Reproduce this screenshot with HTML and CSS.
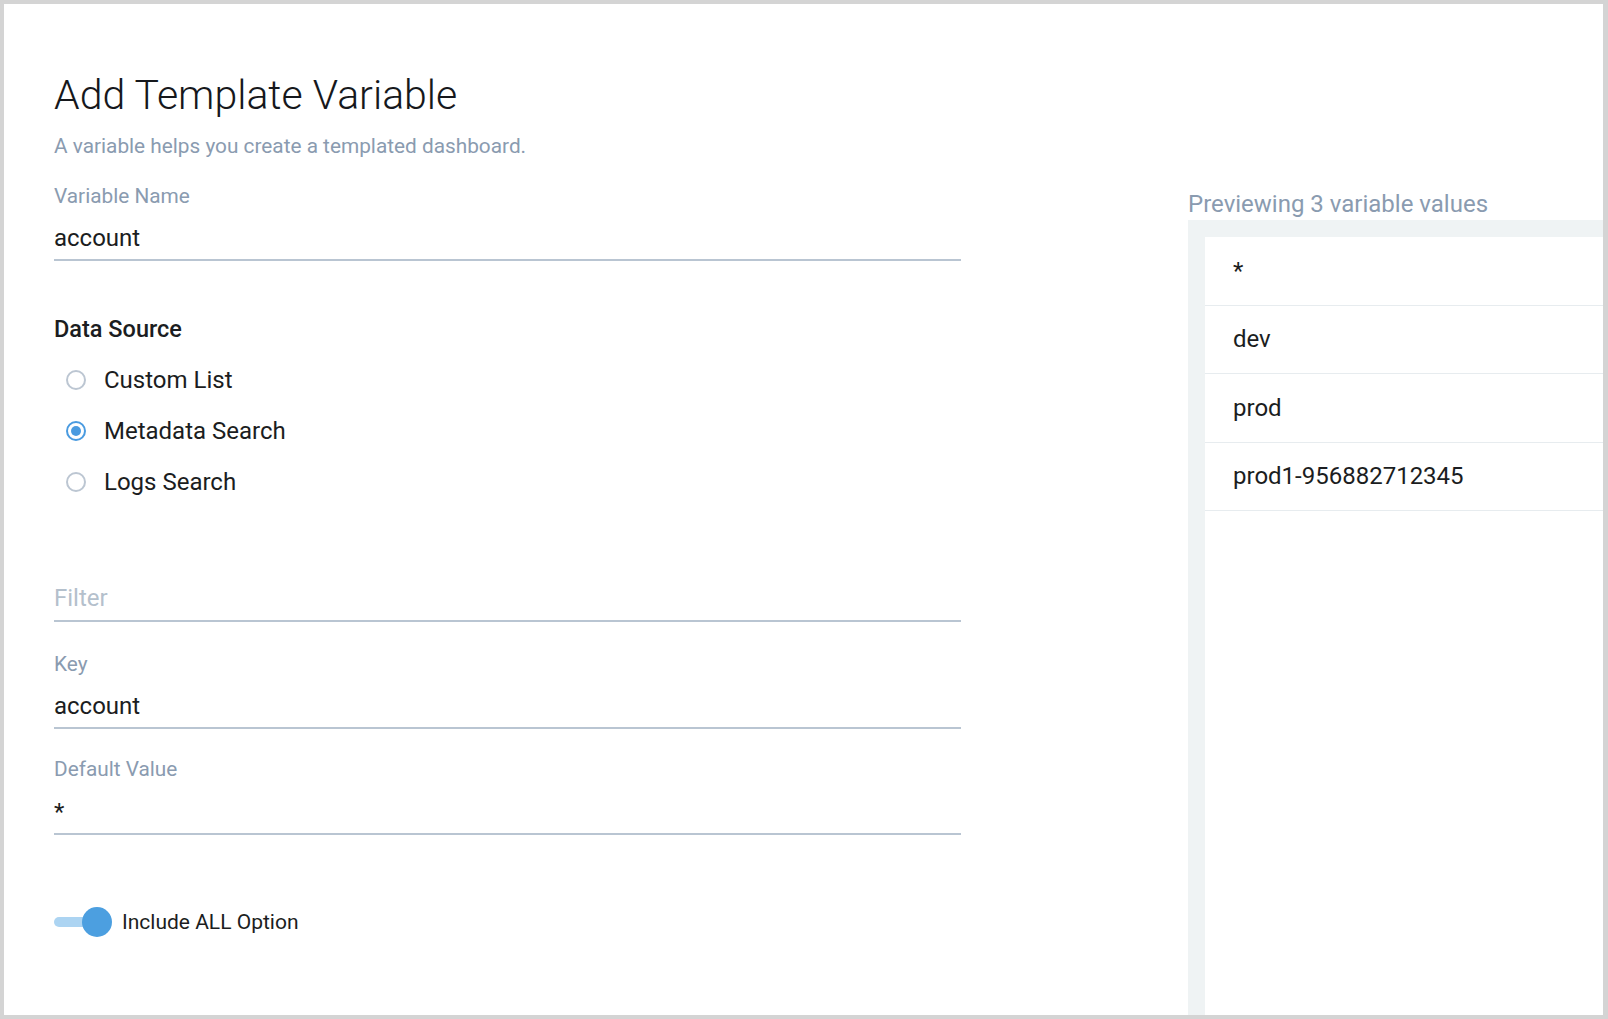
FILE: index.html
```html
<!DOCTYPE html>
<html>
<head>
<meta charset="utf-8">
<title>Add Template Variable</title>
<link rel="stylesheet" href="styles.css">
</head>
<body>
<div class="frame">
  <div class="left">
    <h1 class="title">Add Template Variable</h1>
    <p class="subtitle">A variable helps you create a templated dashboard.</p>

    <div class="field field-name">
      <div class="label">Variable Name</div>
      <div class="value">account</div>
    </div>

    <div class="section-title">Data Source</div>
    <div class="radios">
      <div class="radio-row"><span class="radio"></span><span class="radio-label">Custom List</span></div>
      <div class="radio-row"><span class="radio checked"></span><span class="radio-label">Metadata Search</span></div>
      <div class="radio-row"><span class="radio"></span><span class="radio-label">Logs Search</span></div>
    </div>

    <div class="field field-filter">
      <div class="value placeholder">Filter</div>
    </div>

    <div class="field field-key">
      <div class="label">Key</div>
      <div class="value">account</div>
    </div>

    <div class="field field-default">
      <div class="label">Default Value</div>
      <div class="value">*</div>
    </div>

    <div class="toggle-row">
      <span class="switch"><span class="track"></span><span class="knob"></span></span>
      <span class="toggle-label">Include ALL Option</span>
    </div>
  </div>

  <div class="right">
    <div class="preview-title">Previewing 3 variable values</div>
    <div class="panel">
      <ul class="list">
        <li class="row">*</li>
        <li class="row">dev</li>
        <li class="row">prod</li>
        <li class="row">prod1-956882712345</li>
      </ul>
    </div>
  </div>
</div>
</body>
</html>
```

FILE: styles.css
```css
* { box-sizing: border-box; }

html, body {
  margin: 0;
  padding: 0;
  background: #ffffff;
}

body {
  font-family: Roboto, "Liberation Sans", Arial, sans-serif;
  color: #1b1d21;
}

.frame {
  width: 1608px;
  height: 1019px;
  border-style: solid;
  border-color: #d4d4d4;
  border-width: 4px 5px 4px 4px;
  display: flex;
  padding-left: 50px;
  overflow: hidden;
  background: #ffffff;
}

.left {
  width: 907px;
  flex: none;
}

.title {
  margin: 68px 0 0 0;
  font-size: 41px;
  line-height: 46px;
  font-weight: 300;
  color: #16181c;
}

.subtitle {
  margin: 16px 0 0 0;
  font-size: 20.8px;
  line-height: 24px;
  color: #8a9bb0;
}

.label {
  font-size: 20.8px;
  line-height: 24px;
  color: #8a9bb0;
}

.value {
  margin-top: 16px;
  font-size: 24px;
  line-height: 28px;
  padding-bottom: 7px;
  border-bottom: 2px solid #b9c5d2;
  color: #1b1d21;
}

.value.placeholder {
  margin-top: 0;
  padding-bottom: 8px;
  color: #b4c0cc;
}

.field-name {
  margin-top: 26px;
}

.field-filter {
  margin-top: 77px;
}

.field-key {
  margin-top: 29.5px;
}

.field-default {
  margin-top: 28.5px;
}

.field-default .value {
  margin-top: 16.5px;
}

.section-title {
  margin-top: 55px;
  font-size: 23.5px;
  line-height: 26px;
  font-weight: 500;
  color: #1b1d21;
}

.radios {
  margin-top: 12px;
  display: flex;
  flex-direction: column;
}

.radio-row {
  height: 51px;
  display: flex;
  align-items: center;
  padding-left: 12px;
}

.radio {
  width: 20px;
  height: 20px;
  border-radius: 50%;
  border: 2px solid #bcc6d2;
  display: flex;
  align-items: center;
  justify-content: center;
  flex: none;
}

.radio.checked {
  border-color: #4a9be0;
}

.radio.checked::after {
  content: "";
  width: 10px;
  height: 10px;
  border-radius: 50%;
  background: #4a9be0;
}

.radio-label {
  margin-left: 18px;
  font-size: 24px;
  line-height: 28px;
  color: #1b1d21;
}

.toggle-row {
  margin-top: 72px;
  height: 30px;
  display: flex;
  align-items: center;
}

.switch {
  position: relative;
  width: 58px;
  height: 30px;
  flex: none;
}

.track {
  position: absolute;
  left: 0;
  top: 10px;
  width: 52px;
  height: 10px;
  border-radius: 5px;
  background: #acd4f2;
}

.knob {
  position: absolute;
  left: 28px;
  top: 0;
  width: 30px;
  height: 30px;
  border-radius: 50%;
  background: #4c9fe0;
}

.toggle-label {
  margin-left: 10px;
  font-size: 21px;
  line-height: 26px;
  color: #1b1d21;
}

.right {
  margin-left: 227px;
  flex: 1;
  display: flex;
  flex-direction: column;
  padding-top: 184px;
  min-width: 0;
}

.preview-title {
  font-size: 24px;
  line-height: 32px;
  color: #8a9bb0;
  white-space: nowrap;
}

.panel {
  flex: 1;
  background: #eff3f4;
  padding: 17px 0 0 17px;
  display: flex;
}

.list {
  flex: 1;
  margin: 0;
  padding: 0;
  list-style: none;
  background: #ffffff;
}

.row {
  height: 68.5px;
  display: flex;
  align-items: center;
  padding-left: 28px;
  border-bottom: 1px solid #e7ecef;
  font-size: 24px;
  color: #1b1d21;
}
```
